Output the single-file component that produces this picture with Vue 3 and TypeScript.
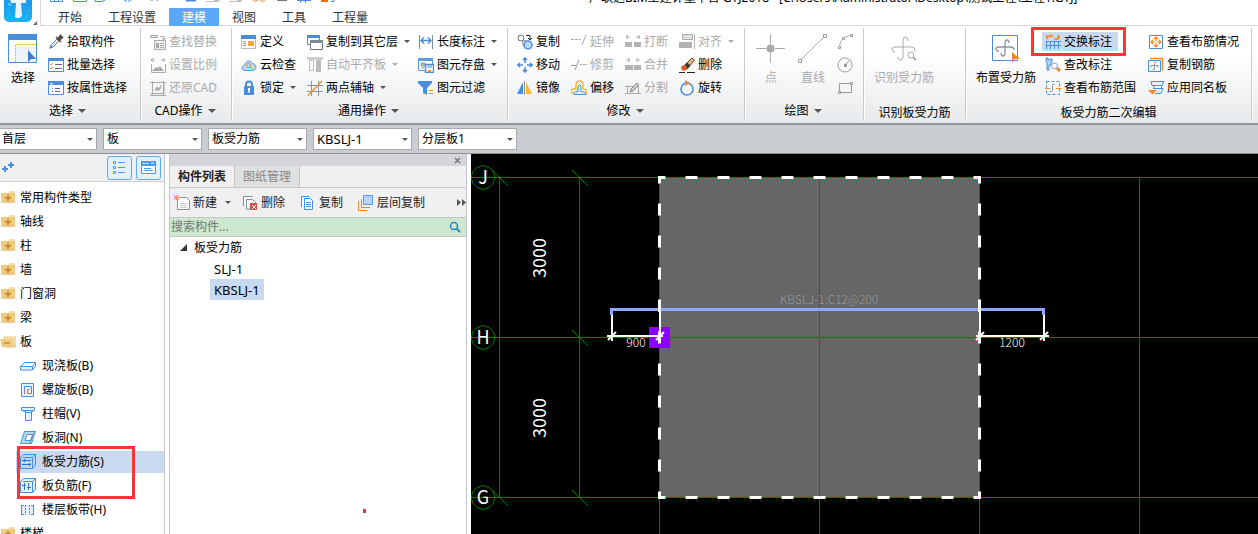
<script setup lang="ts">
import { ref } from 'vue'

interface Command {
  label: string
  icon: string
  disabled?: boolean
  menu?: boolean
  active?: boolean
}

interface Group {
  name: string
  title: string
  menu: boolean
  big: Command[]
  columns: Command[][]
}

const icons: Record<string, string> = {
  pick: '<path d="M2 14l1-3 6-6 2 2-6 6z" fill="#dfe7ef" stroke="#7b8794"/><path d="M8 3l5 5M9.500 5l3-3.500 2 2L11 6.500z" fill="#5b4a48" stroke="#5b4a48" stroke-width="1.600"/><path d="M1 15l2-4 2 2z" fill="#4a8ddc"/>',
  batch: '<path d="M.5 2.500h15v12H.5z" fill="#fff" stroke="#4a8ddc"/><path d="M0 1h16v3H0z" fill="#4a8ddc"/><path d="M2 7l1 1 2-2M2 11l1 1 2-2" fill="none" stroke="#f08a24"/><path d="M7 7.500h7M7 11.500h7" stroke="#667"/>',
  attr: '<path d="M.5 2.500h15v12H.5z" fill="#fff" stroke="#4a8ddc"/><path d="M0 1h16v4H0z" fill="#4a8ddc"/><path d="M2 3h3l-1.500 2z" fill="#fff"/><path d="M4 8.500h1M7 8.500h5M4 11.500h1M7 11.500h5" stroke="#667"/>',
  find: '<path d="M0 1.500h8M0 3.500h8M1 1v3M4 1v3M7 1v3M10 2.500h4v3M12 4l2 2 2-2" fill="none" stroke="#aaa"/><path d="M4.500 6.500h11v9h-11z" fill="#eee" stroke="#aaa"/><path d="M6 9h3v5H6zM10 9h4v1h-4zM10 11h4v1h-4zM10 13h4v1h-4z" fill="#aaa"/>',
  scale: '<path d="M1 3h4M3 1L1 3l2 2M11 3h4M13 1l2 2-2 2M1.500 7v8.500h14V7" fill="none" stroke="#aaa"/><path d="M2 14l4-4 2 1 2-2 4 5z" fill="#aaa"/>',
  restore: '<path d="M0 2.500h3M13 2.500h3M2.500 1v15M13.500 1v15M2 2.500h12v11H1M0 15.500h16" fill="none" stroke="#aaa"/><path d="M5 10l2-3 2 3H5zM7 10c4 1 4-5 4-5" fill="#aaa" stroke="#aaa"/>',
  define: '<path d="M.5 1.500h14v13H.5z" fill="#fff" stroke="#bbb"/><path d="M0 1h15v4H0z" fill="#4a8ddc"/><path d="M7 7h6v5H7z" fill="#f6a93b"/><path d="M2 7.500h3M2 9.500h3M2 11.500h3" stroke="#999"/>',
  cloud: '<path d="M4 13.500C0 13.500 0 9 3.500 8.500 4 4 9 2 11 6.500c4-.500 6 6 1 7z" fill="#b9d8f7" stroke="#5b9be2"/><circle cx="7.500" cy="8.500" r="2" fill="none" stroke="#f08a24"/><path d="M9 10l2 2" stroke="#f08a24"/>',
  lock: '<path d="M5 7V4.500a3 3 0 016 0V7" fill="none" stroke="#4a8ddc" stroke-width="2"/><rect x="3" y="6" width="10" height="9" rx="1" fill="#4a8ddc"/><path d="M7 8h2v2l-.5 3h-1L7 10z" fill="#fff"/>',
  copyfloor: '<path d="M.5 1.500h12v9H.5z" fill="#fff" stroke="#4a8ddc"/><path d="M0 1h13v3H0z" fill="#4a8ddc"/><path d="M3.500 6.500h12v9h-12z" fill="#fff" stroke="#667680"/><path d="M3 6h13v3H3z" fill="#7d8b92"/>',
  align: '<path d="M0 1.500h16" stroke="#bbb" stroke-width="2"/><path d="M2.500 3.500h4v10h-4z" fill="#fff" stroke="#bbb"/><path d="M9 3h5v12H9z" fill="#bbb"/>',
  axis: '<path d="M4.500 1v15M11.500 1v15M0 5.500h16M0 11.500h16" stroke="#8a959e"/><path d="M1 15.500L15 1" stroke="#f08a24" stroke-width="1.200"/>',
  length: '<path d="M1.500 1v14M14.500 1v14" stroke="#7d8b92"/><path d="M3 6.500h10M6 3.500l-3 3 3 3M10 3.500l3 3-3 3" fill="none" stroke="#4a8ddc" stroke-width="1.500"/>',
  store: '<path d="M.5 1.500h14v12H.5z" fill="#fff" stroke="#5b9be2"/><path d="M0 1h15v3H0z" fill="#5b9be2"/><path d="M3 6h4v3H3zM3 11h3" fill="#bbb" stroke="#999"/><path d="M7.500 7.500h8v8h-8z" fill="#fff" stroke="#4a8ddc" stroke-width="1.500"/><path d="M9 8h5v3H9z" fill="#9cc5ee"/><path d="M10 13h3v2h-3z" fill="#f08a24"/>',
  filter: '<path d="M0 1h14v2L9 8v7l-4-2V8L0 3z" fill="#4a8ddc"/><path d="M11 10.500h4M11 13.500h4" stroke="#f08a24"/>',
  copy: '<circle cx="4" cy="4" r="3" fill="#fff" stroke="#667680"/><circle cx="8" cy="9" r="2.500" fill="#eee" stroke="#7d8b92"/><circle cx="11" cy="11" r="4" fill="#b9d8f7" stroke="#4a8ddc" stroke-width="1.500"/><path d="M9 1.500h4v4M11 4l2 2 2-2" fill="none" stroke="#222"/>',
  move: '<path d="M8 1v5M8 10v5M1 8h5M10 8h5M6 3l2-2 2 2M6 13l2 2 2-2M3 6L1 8l2 2M13 6l2 2-2 2" fill="none" stroke="#4a8ddc" stroke-width="1.600"/>',
  mirror: '<path d="M6 2v12H0z" fill="#4a8ddc"/><path d="M9 2l6 12H9z" fill="#f9b52c"/><path d="M7.500 1v14" stroke="#8a959e"/>',
  extend: '<path d="M0 5.500h3M4 5.500h3M8 5.500h2M11 11l4-10" stroke="#aaa" fill="none"/>',
  trim: '<path d="M0 8.500h5M4 13L8 3M9 7.500h2M12 7.500h2M15 7.500h1" stroke="#999" fill="none"/>',
  offset: '<path d="M1 13c-2-3 1-5 4-4V5q0-4 3.500-4T12 5v4q4 0 3.500 4z" fill="#fff" stroke="#f9b52c" stroke-width="1.500"/><path d="M3 14.500q-1-3 4-3V6q1.500-3 3 0v5.500q5 0 5 3z" fill="#dcecff" stroke="#4a8ddc"/>',
  breakit: '<path d="M1 3h4M3 1L1 3l2 2M11 3h4M13 1l2 2-2 2" fill="none" stroke="#aaa"/><path d="M0 8h7v5H0zM9 8h7v5H9z" fill="#b3b3b3"/>',
  merge: '<path d="M1 3h4M3 1l2 2-2 2M11 3h4M13 1l-2 2 2 2" fill="none" stroke="#aaa"/><path d="M0 8h16v5H0z" fill="#b3b3b3"/><path d="M8.500 8v5" stroke="#eee"/>',
  split: '<path d="M2.500 5v9M13.500 5v9M0 6.500h10M0 13.500h16" stroke="#aaa" fill="none"/><path d="M5 12l1-3 6-6 2 2-6 6z" fill="#ccc" stroke="#888"/>',
  alignto: '<path d="M3.500.5h10v5h-10z" fill="#e2e2e2" stroke="#aaa"/><path d="M0 8h13v6H0zM15 0h1v15h-1z" fill="#b3b3b3"/>',
  erase: '<path d="M5 9l8-8 2.500 2L9 11z" fill="#e3bb7a" stroke="#654426"/><path d="M8 5.500l-4 4 4 3 3.500-4z" fill="#393939"/><circle cx="5" cy="11" r="2.800" fill="#e3592e"/><path d="M0 15.500h6M8 15.500h8" stroke="#222"/>',
  rotate: '<circle cx="8" cy="9" r="6" fill="none" stroke="#4a8ddc" stroke-width="1.600"/><path d="M6 0l5 3-5 3z" fill="#f08a24"/>',
  arc: '<path d="M2.500 14c0-7 4-12 13-13" fill="none" stroke="#aaa"/><path d="M1.500 12.500h2v2h-2zM5.500 3.500h2v2h-2zM13.500.5h2v2h-2z" fill="#fff" stroke="#999"/>',
  circle: '<circle cx="8" cy="8" r="7" fill="none" stroke="#999"/><path d="M8 8l4-4" stroke="#999"/><path d="M7 7h3v3H7z" fill="#999"/>',
  rect: '<path d="M2.500 3.500h12v9h-12z" fill="none" stroke="#999"/><path d="M1.500 11.500h2v2h-2zM13.500 2.500h2v2h-2z" fill="#fff" stroke="#999"/>',
  swap: '<path d="M1 7.500h15M1 11.500h15M1.500 7v8M5.500 7v8M9.500 7v8M13.500 7v8" stroke="#4a8ddc"/><path d="M2 5V2h4M1 2l2 3M5 1l2 1-2 1M9 5h4V2M14 1v3l-3 1" fill="none" stroke="#f08a24" stroke-width="1.500"/>',
  edit: '<path d="M1 1v4h1v8h2V8h2V5h1V2H5v1H3V1z" fill="#b9d8f7" stroke="#4a8ddc"/><circle cx="9.500" cy="9" r="3" fill="#fff" stroke="#7b9fd0"/><path d="M12 11l3 3" stroke="#f08a24" stroke-width="3"/>',
  range: '<path d="M1.500 1.500h13v13h-13z" fill="none" stroke="#4a8ddc" stroke-dasharray="3 2"/><path d="M10 4.500H8.500q-1 0-1 1v5q0 1-1 1H5" fill="none" stroke="#8a959e"/><path d="M0 8.500h5M11 8.500h5" stroke="#f08a24"/>',
  status: '<path d="M1.500 1.500h13v13h-13z" fill="#fff" stroke="#4a8ddc"/><path d="M8 3v4M8 9v4M3 8h4M9 8h4M6 5l2-2 2 2M6 11l2 2 2-2M5 6L3 8l2 2M11 6l2 2-2 2" fill="none" stroke="#f08a24" stroke-width="1.200"/>',
  copybar: '<path d="M2 1.500h12.500v12" fill="none" stroke="#f08a24" stroke-width="1.500"/><path d="M.5 3.500h12v11H.5z" fill="#fff" stroke="#4a8ddc"/><path d="M8.500 5.500q-2-1-2 1v6q0 1-2 0M3 10.500q-1-2 1-2h5q2 0 1 2" fill="none" stroke="#7d8b92"/>',
  apply: '<path d="M3 1.500h13l-2 4H4zM6 5.500v3M13.500 5.500v3M5 8.500h10l-2 5H7" fill="#e4f0fc" stroke="#4a8ddc"/><path d="M0 10h9l-4.500 4.500z" fill="#f08a24"/>',
  folder: '<path d="M1 3h14v10H1z" fill="#efca80"/><path d="M8 3l1-2h5l1 2z" fill="#f5ddb0"/><path d="M8 5v6M5 8h6" stroke="#c9902d" stroke-width="2"/>',
  open: '<path d="M4 3h12v10H4z" fill="#f7e2b8" stroke="#efca80"/><path d="M0 5h13l2 8H2z" fill="#efca80"/><path d="M4 9h6" stroke="#c9902d" stroke-width="1.500"/>',
  cast: '<path d="M.5 8.500l4-4h11l-3 4zM.5 8.500v3.500h12l3-4V4.500M12.500 8.500V12" fill="#e4f0fc" stroke="#4a8ddc"/>',
  spiral: '<path d="M1.500 1.500h12v13h-12z" fill="#e4f0fc" stroke="#4a8ddc"/><path d="M4.500 12V4.500h7v7h-4v-4h2" fill="none" stroke="#4a8ddc"/>',
  cap: '<path d="M1.500 1.500h13v3l-3 1v9h-6v-9l-4-1z" fill="#e4f0fc" stroke="#4a8ddc"/><path d="M2 4.500h12M5 6.500h6" stroke="#4a8ddc"/>',
  hole: '<path d="M4.500 1.500h11l-4 12H.5z" fill="#b9d8f7" stroke="#4a8ddc"/><path d="M7 4.500h5.500l-2 6H5z" fill="#fff" stroke="#4a8ddc"/><path d="M2 13.500h8l4-11" fill="none" stroke="#7d8b92"/>',
  bars: '<path d="M.5 3.500l3-3h12v11l-3 3H.5zM3 3.500h9.500v11M12.500 3.500l3-3" fill="#b9d8f7" stroke="#4a8ddc"/><path d="M2 6.500h9M2 10.500h9M4.500 5v3M9.500 9v3" stroke="#3676c0"/>',
  negbars: '<path d="M.5 3.500l3-3h12v11l-3 3H.5zM3 3.500h9.500v11M12.500 3.500l3-3" fill="#e4f0fc" stroke="#4a8ddc"/><path d="M4.500 5v7M8.500 5v7M2 7.500h4M7 9.500h4" stroke="#3676c0"/>',
  strip: '<path d="M1 3h13v10H1z" fill="#e4f0fc"/><path d="M1.500 3v10M13.500 3v10" stroke="#4a8ddc"/><path d="M5.500 3v10M9.500 3v10" stroke="#4a8ddc" stroke-dasharray="2 1"/><path d="M1 3.500h3M11 3.500h3M1 12.500h3M11 12.500h3" stroke="#4a8ddc"/>',
  add: '<path d="M3.500 2.500h9l3 3v9h-12z" fill="#fff" stroke="#8a959e"/><path d="M6 8.500h7M6 10.500h7M6 12.500h7" stroke="#ccc"/><path d="M0 0l5 5M5 0L0 5M0 2.500h5M2.500 0v5" stroke="#f6a021"/>',
  remove: '<path d="M1.500 11V1.500h9M4.500 14V4.500h6l3 3v6.500z" fill="#fff" stroke="#7d8b92"/><path d="M8 8h7v7H8z" fill="#d64f4f"/><path d="M10 10l4 4M14 10l-4 4" stroke="#fff"/>',
  pages: '<path d="M1.500 12V1.500h8M4.500 3.500h6l2 2v9h-8z" fill="#fff" stroke="#4a8ddc"/><path d="M6 7.500h5M6 9.500h5M6 11.500h5" stroke="#4a8ddc"/>',
  layers: '<path d="M.5 6v9.500H9M3.500 4v8.500H12" fill="none" stroke="#f08a24"/><path d="M5.500.5h9v9h-9z" fill="#b3d5fb" stroke="#5b9be2"/>',
  // 30px drawings for the large buttons
  select: '<path d="M.5.500h28v28H.5z" fill="#eef3fa" stroke="#4a8ddc"/><path d="M0 0h29v6H0z" fill="#4a8ddc"/><path d="M1 6h27v4H7v18H1z" fill="#fff"/><path d="M7.500 28V10.500H28" fill="none" stroke="#f9b52c" stroke-dasharray="2 1"/><path d="M20 16v12l3-3h5z" fill="#3b7cd0"/>',
  point: '<path d="M14.500 0v10M14.500 19v10M0 14.500h10M19 14.500h10" stroke="#aaa"/><circle cx="14.500" cy="14.500" r="4" fill="#aaa"/>',
  line: '<path d="M2 27L27 2" stroke="#aaa"/><path d="M.5 25.500h3v3h-3zM25.500.500h3v3h-3z" fill="#fff" stroke="#999"/>',
  detect: '<path d="M19 7q0-4-2.500-4T14 6v17q0 3-2.500 3T9 23M6 18q-3 0-3-2.500T6 13h17q3 0 3 4" fill="none" stroke="#aaa"/><circle cx="22" cy="21" r="3" fill="#fff" stroke="#aaa"/><path d="M24 23l3 3" stroke="#aaa" stroke-width="2"/>',
  place: '<path d="M1.500 1.500h25v25h-25z" fill="#fff" stroke="#4a8ddc"/><path d="M18 9q0-3-2-3t-2 3v10q0 3-2 3t-2-3M8 17q-3 0-3-2t3-2h12q3 0 3 3" fill="none" stroke="#8a959e" stroke-width="1.300"/><path d="M21 18v11l3-4h5z" fill="#f08a24"/>',
}

const cmd = (icon: string, label: string, extra: Partial<Command> = {}): Command => ({ icon, label, ...extra })
const off = { disabled: true }

const groups: Group[] = [
  {
    name: 'pick', title: '选择', menu: true, big: [cmd('select', '选择')],
    columns: [[cmd('pick', '拾取构件'), cmd('batch', '批量选择'), cmd('attr', '按属性选择')]],
  },
  {
    name: 'cad', title: 'CAD操作', menu: true, big: [],
    columns: [[cmd('find', '查找替换', off), cmd('scale', '设置比例', off), cmd('restore', '还原CAD', off)]],
  },
  {
    name: 'common', title: '通用操作', menu: true, big: [],
    columns: [
      [cmd('define', '定义'), cmd('cloud', '云检查'), cmd('lock', '锁定', { menu: true })],
      [cmd('copyfloor', '复制到其它层', { menu: true }), cmd('align', '自动平齐板', { disabled: true, menu: true }), cmd('axis', '两点辅轴', { menu: true })],
      [cmd('length', '长度标注', { menu: true }), cmd('store', '图元存盘', { menu: true }), cmd('filter', '图元过滤')],
    ],
  },
  {
    name: 'modify', title: '修改', menu: true, big: [],
    columns: [
      [cmd('copy', '复制'), cmd('move', '移动'), cmd('mirror', '镜像')],
      [cmd('extend', '延伸', off), cmd('trim', '修剪', off), cmd('offset', '偏移')],
      [cmd('breakit', '打断', off), cmd('merge', '合并', off), cmd('split', '分割', off)],
      [cmd('alignto', '对齐', { disabled: true, menu: true }), cmd('erase', '删除'), cmd('rotate', '旋转')],
    ],
  },
  {
    name: 'draw', title: '绘图', menu: true, big: [cmd('point', '点', off), cmd('line', '直线', off)],
    columns: [[cmd('arc', '', off), cmd('circle', '', off), cmd('rect', '', off)]],
  },
  { name: 'detect', title: '识别板受力筋', menu: false, big: [cmd('detect', '识别受力筋', off)], columns: [] },
  {
    name: 'rebar', title: '板受力筋二次编辑', menu: false, big: [cmd('place', '布置受力筋')],
    columns: [
      [cmd('swap', '交换标注', { active: true }), cmd('edit', '查改标注'), cmd('range', '查看布筋范围')],
      [cmd('status', '查看布筋情况'), cmd('copybar', '复制钢筋'), cmd('apply', '应用同名板')],
    ],
  },
]

const tabs = ['开始', '工程设置', '建模', '视图', '工具', '工程量']
const activeTab = ref('建模')
const pickers = [
  { name: '楼层', value: '首层' },
  { name: '构件分类', value: '板' },
  { name: '构件类型', value: '板受力筋' },
  { name: '构件', value: 'KBSLJ-1', latin: true },
  { name: '分层', value: '分层板1' },
]

const folders = ['常用构件类型', '轴线', '柱', '墙', '门窗洞', '梁']
const slabs = [
  { icon: 'cast', label: '现浇板(B)' },
  { icon: 'spiral', label: '螺旋板(B)' },
  { icon: 'cap', label: '柱帽(V)' },
  { icon: 'hole', label: '板洞(N)' },
  { icon: 'bars', label: '板受力筋(S)' },
  { icon: 'negbars', label: '板负筋(F)' },
  { icon: 'strip', label: '楼层板带(H)' },
]
const activeSlab = ref('板受力筋(S)')

const listTools = [
  cmd('add', '新建', { menu: true }),
  cmd('remove', '删除'),
  cmd('pages', '复制'),
  cmd('layers', '层间复制'),
]
const members = ['SLJ-1', 'KBSLJ-1']
const activeMember = ref('KBSLJ-1')
const keyword = ref('')

const axes = [
  { label: 'J', y: 23 },
  { label: 'H', y: 183 },
  { label: 'G', y: 343 },
]
const columnsX = [188, 348, 508, 668]
</script>

<template>
  <div class="app">
    <header class="top">
      <button class="logo" aria-label="应用菜单">
        <svg width="36" height="27" viewBox="0 0 36 27">
          <defs>
            <linearGradient id="logo-fill" x1="0" y1="0" x2="0" y2="1">
              <stop offset="0" stop-color="#1d8fe8" />
              <stop offset="1" stop-color="#17b4f4" />
            </linearGradient>
          </defs>
          <rect x="0" y="-8" width="28" height="30" rx="5" fill="url(#logo-fill)" />
          <path d="M4 4h2v2M24 10h1M5 14h1M22 16h1" stroke="#9fe0ff" fill="none" />
          <path d="M6-1h16v4h-5l1 13q-4 4-7 1l1-14H7z" fill="#e9f7ff" />
          <path d="M33 21v4h-4z" fill="#666" />
        </svg>
      </button>
      <div class="heading">
        <div class="titlebar">
          <svg class="quick" width="300" height="3" viewBox="0 0 300 3" aria-hidden="true">
            <g fill="none" stroke="#4a8ddc">
              <path d="M9.500 0v1.500h12V0M13.500 0v2M17.500 0v2M32.500 0v1.500h13V0M54 0v1.500h7l4-2M83 0l3 1.500M90 0l-3 1.500" />
              <path d="M145 .500h10" stroke-width="2" />
              <path d="M256 .500h14M259.500 0v3M264.500 0v3" />
              <path d="M290 1.500h3V0" />
            </g>
            <path d="M109 0l3 1M118 0l-3 1M165 1.500h12M173 .500h5l2 2M188 1.500h12M196 .500h5" fill="none" stroke="#bbb" />
            <path d="M212 0q2 3 5 0M219 0q2 3 5 0" fill="none" stroke="#f08a24" />
            <path d="M236 .500h10" stroke="#778" />
            <path d="M280 0h7v2h-7z" fill="#f0701a" />
          </svg>
          <span class="title">广联达BIM土建计量平台 GTJ2018 - [C:\Users\Administrator\Desktop\测试工程\工程1.GTJ]</span>
        </div>
        <nav class="tabs" aria-label="功能区">
          <button v-for="t in tabs" :key="t" :class="{ on: t === activeTab }" @click="activeTab = t">{{ t }}</button>
        </nav>
      </div>
    </header>

    <section class="ribbon">
      <div v-for="g in groups" :key="g.name" class="group" :class="g.name">
        <div class="body">
          <button v-for="b in g.big" :key="b.icon" class="big" :disabled="b.disabled">
            <svg width="30" height="30" viewBox="0 0 30 30" aria-hidden="true" v-html="icons[b.icon]" />
            <span>{{ b.label }}</span>
          </button>
          <div v-for="(col, i) in g.columns" :key="i" class="column">
            <button v-for="c in col" :key="c.icon" class="cmd" :class="{ active: c.active }" :disabled="c.disabled" :aria-label="c.label || c.icon">
              <svg width="16" height="16" viewBox="0 0 16 16" aria-hidden="true" v-html="icons[c.icon]" />
              <span v-if="c.label">{{ c.label }}</span>
              <i v-if="c.menu" class="caret" />
              <i v-if="c.active" class="mark" />
            </button>
          </div>
        </div>
        <button class="caption">{{ g.title }}<i v-if="g.menu" class="caret large" /></button>
      </div>
    </section>

    <section class="pickers">
      <label v-for="p in pickers" :key="p.name" class="picker">
        <select :aria-label="p.name" :class="{ latin: p.latin }">
          <option>{{ p.value }}</option>
        </select>
        <i class="caret" />
      </label>
    </section>

    <main class="work">
      <aside class="types">
        <div class="types-head">
          <svg width="14" height="14" viewBox="0 0 14 14" aria-hidden="true">
            <path d="M3 5v6M0 8h6M9 1v6M6 4h6" stroke="#4a8ddc" stroke-width="2" />
          </svg>
          <button class="view" aria-label="列表视图">
            <svg width="16" height="16" viewBox="0 0 16 16">
              <path d="M1.500 1.500h2v2h-2zM1.500 6.500h2v2h-2zM1.500 11.500h2v2h-2zM6 2.500h7M6 7.500h7M6 12.500h7" fill="none" stroke="#4a9bea" />
            </svg>
          </button>
          <button class="view" aria-label="面板视图">
            <svg width="16" height="16" viewBox="0 0 16 16">
              <path d="M.5 1.500h14v12H.5z" fill="#fff" stroke="#4a9bea" />
              <path d="M0 1h15v5H0z" fill="#4a9bea" />
              <path d="M2 3.500h2M5 3.500h2M10 3h3" stroke="#fff" />
              <path d="M3 8.500h7M3 10.500h9" stroke="#4a9bea" />
            </svg>
          </button>
        </div>
        <ul class="tree">
          <li v-for="f in folders" :key="f">
            <button><svg width="16" height="16" viewBox="0 0 16 16" v-html="icons.folder" />{{ f }}</button>
          </li>
          <li>
            <button><svg width="16" height="16" viewBox="0 0 16 16" v-html="icons.open" />板</button>
            <ul class="children">
              <li v-for="s in slabs" :key="s.label">
                <button :class="{ on: s.label === activeSlab }" @click="activeSlab = s.label">
                  <svg width="16" height="16" viewBox="0 0 16 16" v-html="icons[s.icon]" />{{ s.label }}
                </button>
                <i v-if="s.icon === 'bars'" class="mark" />
              </li>
            </ul>
          </li>
          <li>
            <button><svg width="16" height="16" viewBox="0 0 16 16" v-html="icons.folder" />楼梯</button>
          </li>
        </ul>
      </aside>

      <section class="members">
        <div class="strip">
          <button aria-label="关闭">
            <svg width="7" height="7" viewBox="0 0 7 7"><path d="M1 1l5 5M6 1L1 6" stroke="#777" stroke-width="1.500" /></svg>
          </button>
        </div>
        <div class="panel-tabs">
          <button class="on">构件列表</button>
          <button>图纸管理</button>
        </div>
        <div class="tools">
          <button v-for="t in listTools" :key="t.label">
            <svg width="16" height="16" viewBox="0 0 16 16" v-html="icons[t.icon]" />
            <span>{{ t.label }}</span>
            <i v-if="t.menu" class="caret" />
          </button>
          <button class="more" aria-label="更多">
            <svg width="9" height="7" viewBox="0 0 9 7"><path d="M0 0l4 3.500L0 7zM5 0l4 3.500L5 7z" fill="#555" /></svg>
          </button>
        </div>
        <label class="search">
          <input v-model="keyword" type="text" placeholder="搜索构件..." aria-label="搜索构件" />
          <svg width="12" height="12" viewBox="0 0 12 12" aria-hidden="true">
            <circle cx="5" cy="5" r="3.500" fill="none" stroke="#2f86bd" stroke-width="1.500" />
            <path d="M7.500 7.500L11 11" stroke="#2f86bd" stroke-width="2" />
          </svg>
        </label>
        <div class="list">
          <button class="parent">
            <svg width="7" height="7" viewBox="0 0 7 7"><path d="M7 0v7H0z" fill="#333" /></svg>板受力筋
          </button>
          <button v-for="m in members" :key="m" class="leaf latin" :class="{ on: m === activeMember }" @click="activeMember = m">{{ m }}</button>
          <i class="dot" />
        </div>
      </section>

      <section class="canvas">
        <svg width="100%" height="100%" role="img" aria-label="板受力筋平面图">
          <rect x="189" y="24" width="320" height="320" fill="#666" />
          <g stroke="#f00" shape-rendering="crispEdges">
            <line v-for="a in axes" :key="a.label" x1="188" :y1="a.y + 0.5" x2="100%" :y2="a.y + 0.5" />
            <line v-for="x in columnsX" :key="x" :x1="x + 0.5" y1="23" :x2="x + 0.5" y2="344" />
          </g>
          <g stroke="#008000" fill="none">
            <g shape-rendering="crispEdges">
              <path d="M28.500 23v321M108.500 23v321" />
              <line v-for="x in columnsX" :key="x" :x1="x + 0.5" y1="344" :x2="x + 0.5" y2="100%" />
              <line v-for="a in axes" :key="a.label" x1="0" :y1="a.y + 0.5" x2="188" :y2="a.y + 0.5" />
            </g>
            <path d="M21 16l16 16M21 336l16 16" />
            <path v-for="a in axes" :key="a.label" :d="`M101 ${a.y - 7}l16 16`" />
            <path v-for="a in axes" :key="a.label" :d="`M12 ${a.y - 11.5}l6 2 4 4 2 6-2 6-4 4-6 2-6-2-4-4-2-6 2-6 4-4z`" />
          </g>
          <rect x="178" y="173" width="21" height="21" fill="#8b00ff" />
          <rect x="188.500" y="23.500" width="320" height="320" fill="none" stroke="#fff" stroke-width="3" stroke-dasharray="12 20" stroke-dashoffset="6" />
          <path d="M140.500 161v-5.500h432v5.500" fill="none" stroke="#8fa8fb" stroke-width="3" />
          <g stroke="#fff" fill="none">
            <path d="M141 161v26M189 146v42M509 146v42M573 161v26M136 182h56M505 182h73" stroke-width="2" />
            <path d="M188.500 146v12M508.500 146v12" stroke-width="3" />
            <path d="M137 186l8-8M185 186l8-8M505 186l8-8M569 186l8-8" stroke-width="2" />
          </g>
          <g class="ink" fill="#fff" text-anchor="middle">
            <text v-for="a in axes" :key="a.label" x="12" :y="a.y + 7" class="large">{{ a.label }}</text>
            <text class="large" transform="translate(75 104) rotate(-90)">3000</text>
            <text class="large" transform="translate(75 264) rotate(-90)">3000</text>
            <text x="165" y="193">900</text>
            <text x="541" y="193">1200</text>
            <text x="358" y="150" fill="#999">KBSLJ-1:C12@200</text>
          </g>
        </svg>
      </section>
    </main>
  </div>
</template>

<style>
body {
  background: #fff;
}
</style>

<style scoped>
.app {
  display: flex;
  flex-direction: column;
  height: 100vh;
  overflow: hidden;
  color: #000;
  font: 12px/16px "Noto Sans", "Noto Sans CJK SC", sans-serif;
}
button,
select,
input {
  margin: 0;
  padding: 0;
  border: 0;
  background: none;
  color: inherit;
  font: inherit;
  white-space: nowrap;
}
svg {
  display: block;
  flex: none;
}
ul {
  margin: 0;
  padding: 0;
  list-style: none;
}
.latin {
  font-size: 13px;
}
.caret {
  flex: none;
  width: 0;
  height: 0;
  border: 3px solid transparent;
  border-top-color: #555;
  border-bottom: 0;
}
.caret.large {
  border-width: 4px 4px 0;
}
.mark {
  position: absolute;
  border: 3px solid #fd3535;
  pointer-events: none;
  z-index: 2;
}

.top {
  display: flex;
  height: 26px;
  flex: none;
}
.logo {
  width: 41px;
  padding-left: 4px;
  border-right: 1px solid #d5d8dc;
}
.heading {
  flex: 1;
  min-width: 0;
  border-bottom: 1px solid #d5d8dc;
}
.titlebar {
  display: flex;
  align-items: flex-end;
  height: 8px;
  overflow: hidden;
}
.quick {
  align-self: flex-start;
}
.title {
  margin-left: 248px;
  margin-bottom: 2px;
  white-space: nowrap;
}
.tabs {
  display: flex;
  padding-left: 4px;
  color: #333;
}
.tabs button {
  height: 19px;
  padding: 0 13px;
}
.tabs .on {
  background: #5ba8f7;
  color: #fff;
}

.ribbon {
  display: flex;
  flex: none;
  height: 97px;
  border-bottom: 2px solid #92969b;
  background: linear-gradient(#fff 30%, #e7eaec);
}
.group {
  display: flex;
  flex-direction: column;
  box-sizing: border-box;
  margin: 2px 0;
  border-right: 1px solid #c8cbce;
  box-shadow: 1px 0 #fff;
}
.body {
  display: flex;
  height: 73px;
  padding-top: 2px;
  box-sizing: border-box;
}
.column {
  display: flex;
  flex-direction: column;
}
.cmd {
  position: relative;
  display: flex;
  align-items: center;
  gap: 3px;
  height: 23px;
}
.cmd .caret {
  margin-left: 3px;
}
.big {
  display: flex;
  flex-direction: column;
  align-items: center;
  gap: 6px;
  height: 60px;
  padding-top: 4px;
}
button:disabled {
  color: #aaa;
}
button:disabled .caret {
  border-top-color: #aaa;
}
.caption {
  display: flex;
  align-items: center;
  justify-content: center;
  gap: 5px;
  height: 20px;
  padding-right: 2px;
}
.pick {
  width: 141px;
}
.pick .big {
  margin: 0 10px 0 8px;
}
.pick .caption {
  padding-right: 5px;
}
.cad {
  width: 91px;
}
.cad .body,
.common .body,
.modify .body {
  padding-left: 9px;
}
.common {
  width: 276px;
}
.common .column:nth-child(1) {
  width: 66px;
}
.common .column:nth-child(2) {
  width: 111px;
}
.modify {
  width: 237px;
}
.modify .column {
  width: 54px;
}
.draw {
  width: 119px;
}
.draw .big {
  width: 30px;
  margin-left: 11px;
}
.draw .big + .big {
  margin-left: 12px;
}
.draw .column {
  margin-left: 9px;
}
.detect {
  width: 102px;
}
.detect .body {
  padding-left: 10px;
}
.rebar {
  width: 286px;
}
.rebar .body {
  padding-left: 10px;
}
.rebar .column {
  margin-left: 9px;
  width: 94px;
}
.detect .caption,
.rebar .caption {
  padding-top: 3px;
  padding-right: 0;
}
.cmd.active {
  align-self: flex-start;
  height: 19px;
  margin: 2px 0 2px -3px;
  padding: 0 6px 0 3px;
  background: #c9d9ef;
}
.cmd .mark {
  inset: -5px -8px -5px -11px;
}

.pickers {
  display: flex;
  flex: none;
  gap: 6px;
  height: 22px;
  padding: 3px 0;
  border-bottom: 1px solid #8e9297;
  background: #c9cdd2;
}
.picker {
  position: relative;
  box-sizing: border-box;
  width: 99px;
  border: 1px solid #a6a9ae;
  background: #fff;
}
.picker:first-child {
  width: 97px;
  border-left: 0;
}
.picker select {
  width: 100%;
  height: 20px;
  padding: 0 16px 0 3px;
  appearance: none;
}
.picker:first-child select {
  padding-left: 2px;
}
.picker .caret {
  position: absolute;
  top: 9px;
  right: 3px;
  pointer-events: none;
}

.work {
  display: flex;
  flex: 1;
  gap: 4px;
  min-height: 0;
}
.types {
  width: 164px;
  flex: none;
  border-right: 1px solid #c3c6ca;
  overflow: hidden;
}
.types-head {
  display: flex;
  align-items: center;
  gap: 4px;
  height: 27px;
  padding: 0 3px 0 2px;
  border-bottom: 1px solid #d0d3d6;
  background: #f0f0f0;
}
.types-head > svg {
  margin-right: auto;
}
.view {
  box-sizing: border-box;
  width: 25px;
  height: 24px;
  padding: 0 4px;
  border: 1px solid #62a9f0;
  border-radius: 3px;
  background: #e3f0fd;
}
.tree {
  padding-top: 4px;
}
.tree li {
  position: relative;
}
.tree button {
  display: flex;
  align-items: center;
  gap: 4px;
  box-sizing: border-box;
  width: 100%;
  height: 24px;
}
.children button {
  gap: 6px;
  height: 22px;
  padding-left: 4px;
}
.children li {
  padding: 1px 0 1px 16px;
}
.children .on {
  background: #c9d9ef;
}
.tree .mark {
  top: -4px;
  left: 17px;
  width: 112px;
  height: 47px;
}

.members {
  display: flex;
  flex-direction: column;
  width: 296px;
  flex: none;
  border: solid #c3c6ca;
  border-width: 0 1px;
}
.strip {
  display: flex;
  justify-content: flex-end;
  align-items: center;
  height: 12px;
  padding-right: 5px;
  background: #d4d5da;
}
.panel-tabs {
  display: flex;
  height: 21px;
  border-bottom: 1px solid #c3c6ca;
  background: #f0f0f0;
}
.panel-tabs button {
  padding: 0 8px;
  border-right: 1px solid #c3c6ca;
  background: #e0e0e0;
  color: #888;
}
.panel-tabs .on {
  background: #f0f0f0;
  color: #222;
  font-weight: bold;
}
.tools {
  display: flex;
  align-items: center;
  height: 29px;
  padding-left: 4px;
  border-bottom: 1px solid #c3c6ca;
  background: #f0f0f0;
  color: #222;
}
.tools button {
  display: flex;
  align-items: center;
  gap: 3px;
  margin-right: 15px;
}
.tools .caret {
  margin-left: 5px;
}
.tools button:first-child {
  margin-right: 11px;
}
.tools .more {
  margin: 0 0 0 auto;
}
.search {
  display: flex;
  align-items: center;
  height: 18px;
  padding-right: 5px;
  border-bottom: 1px solid #c3c6ca;
  background: #cce8cf;
}
.search input {
  flex: 1;
  min-width: 0;
  padding-left: 1px;
  outline: 0;
}
.search input::placeholder {
  color: #777;
  opacity: 1;
}
.list {
  position: relative;
  display: flex;
  flex-direction: column;
  align-items: flex-start;
  flex: 1;
}
.list button {
  height: 21px;
}
.parent {
  display: flex;
  align-items: center;
  gap: 7px;
  padding-left: 10px;
}
.list .leaf {
  margin-left: 40px;
  padding: 0 4px;
}
.leaf.on {
  background: #c9d9ef;
}
.dot {
  position: absolute;
  left: 193px;
  top: 272px;
  width: 3px;
  height: 4px;
  background: #d33a3a;
}

.canvas {
  flex: 1;
  min-width: 0;
  background: #000;
}
.ink {
  font-family: "Noto Sans CJK SC", sans-serif;
  font-size: 12px;
  font-weight: 300;
}
.ink .large {
  font-size: 18px;
  font-weight: 400;
}
</style>
